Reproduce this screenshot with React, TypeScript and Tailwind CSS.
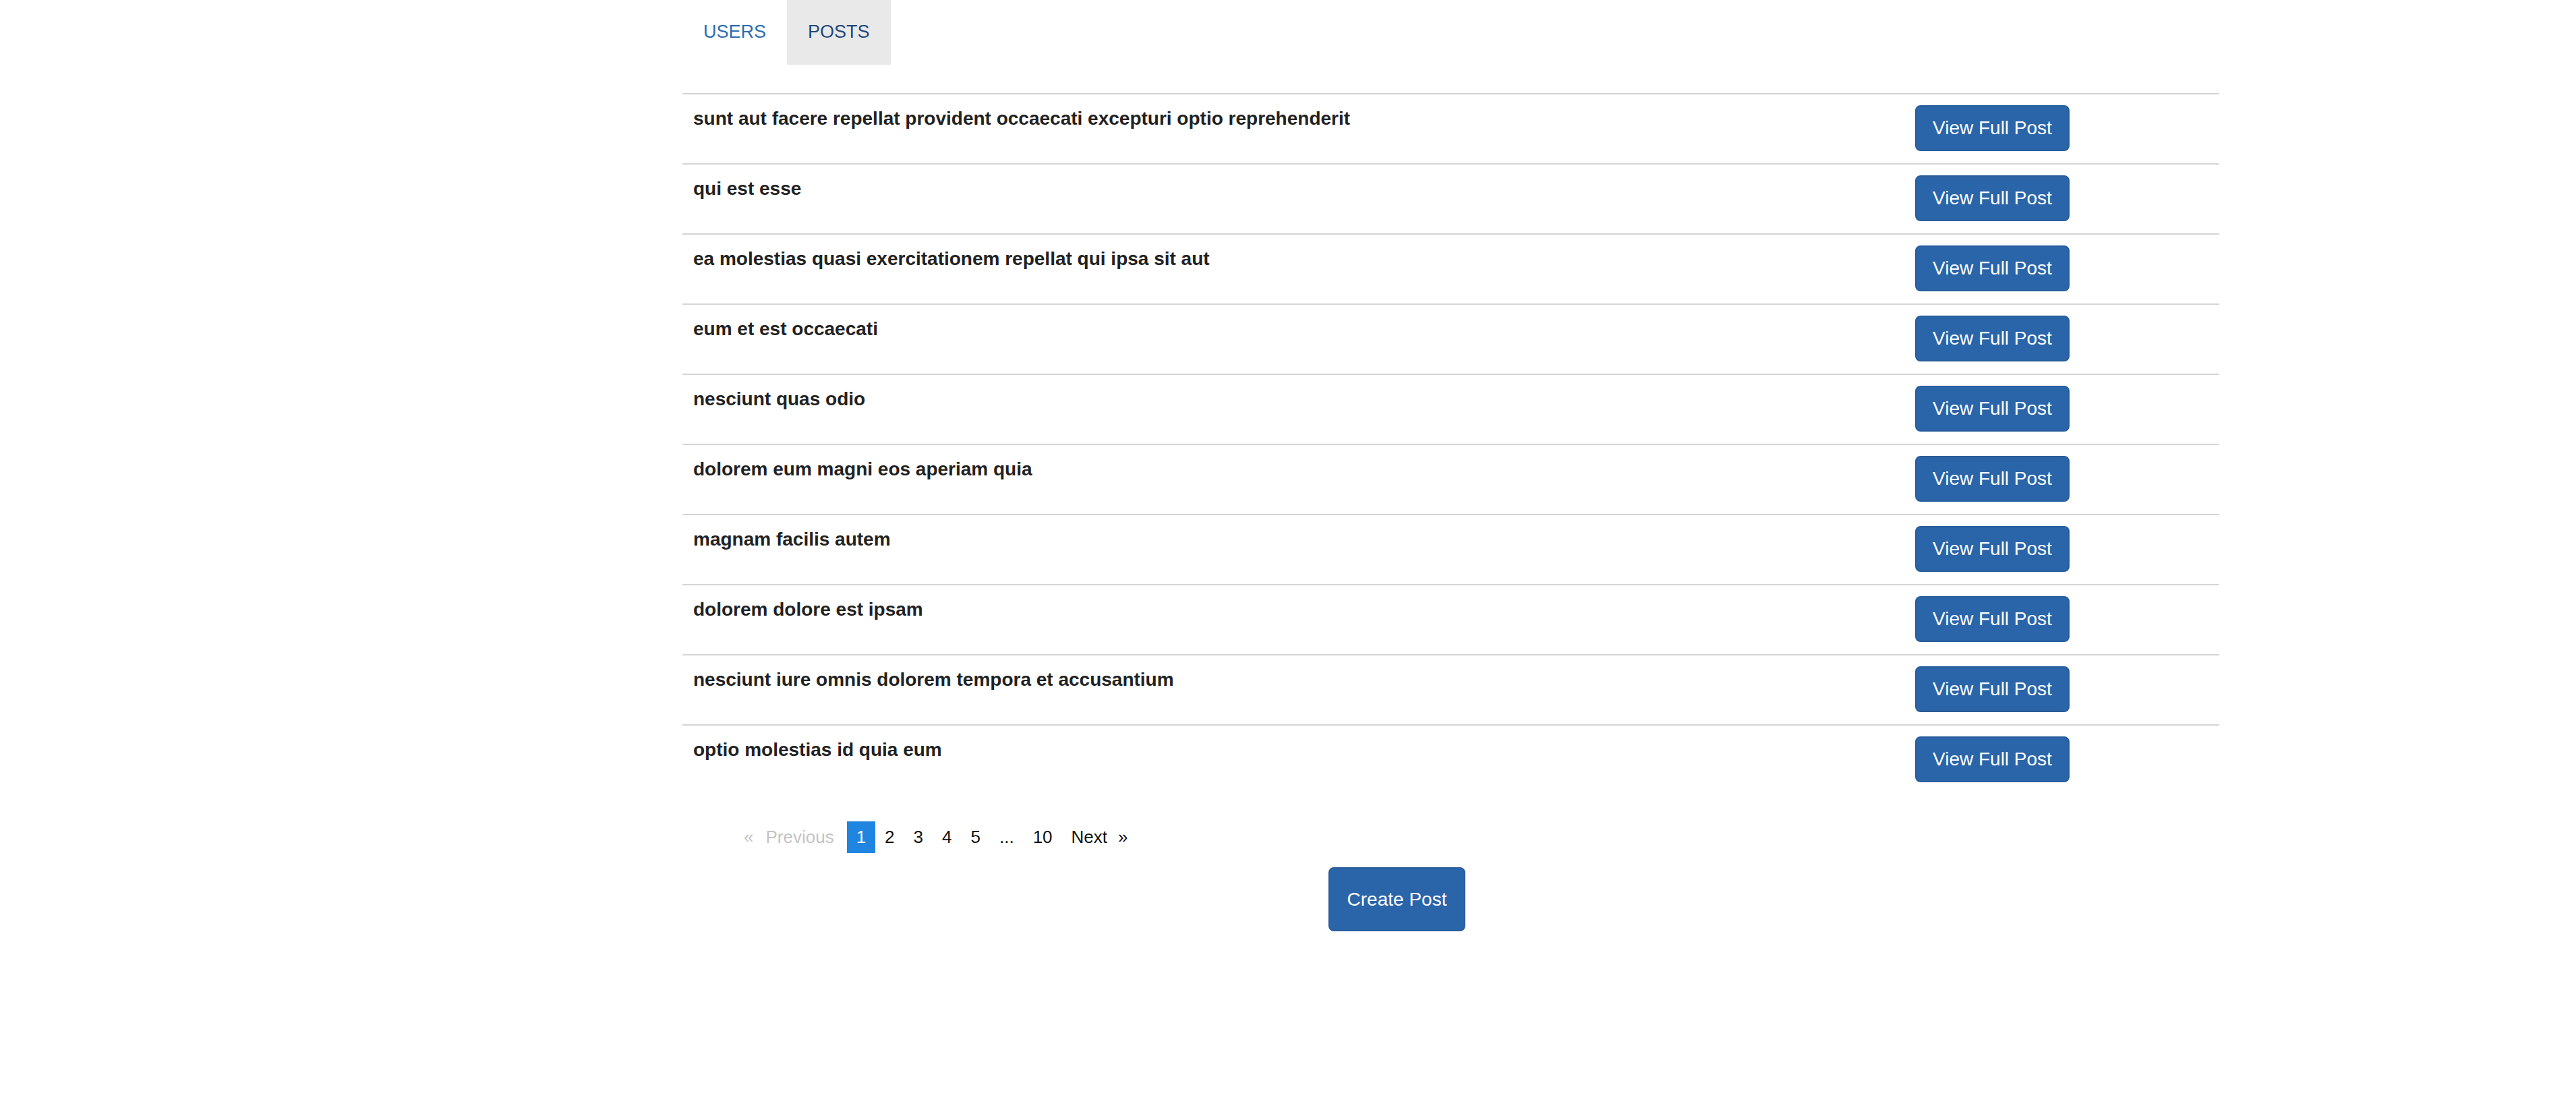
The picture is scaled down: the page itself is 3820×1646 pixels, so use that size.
import { useState } from "react";

const posts = [
  "sunt aut facere repellat provident occaecati excepturi optio reprehenderit",
  "qui est esse",
  "ea molestias quasi exercitationem repellat qui ipsa sit aut",
  "eum et est occaecati",
  "nesciunt quas odio",
  "dolorem eum magni eos aperiam quia",
  "magnam facilis autem",
  "dolorem dolore est ipsam",
  "nesciunt iure omnis dolorem tempora et accusantium",
  "optio molestias id quia eum",
];

const pages = ["1", "2", "3", "4", "5", "...", "10"];

export default function App() {
  const [tab, setTab] = useState("posts");
  const [page, setPage] = useState("1");

  return (
    <div className="min-h-screen bg-white font-['Liberation_Sans',Arial,sans-serif]">
      <div className="ml-[1012px] w-[2279px]">
        {/* Tabs */}
        <ul className="flex h-[96px]">
          <li
            onClick={() => setTab("users")}
            className={`flex items-center px-[31px] pb-[2px] text-[27px] cursor-pointer ${
              tab === "users" ? "bg-[#e9e9e9] text-[#1f477a]" : "text-[#2c6cb2]"
            }`}
          >
            USERS
          </li>
          <li
            onClick={() => setTab("posts")}
            className={`flex items-center px-[31px] pb-[2px] text-[27px] cursor-pointer ${
              tab === "posts" ? "bg-[#e9e9e9] text-[#1f477a]" : "text-[#2c6cb2]"
            }`}
          >
            POSTS
          </li>
        </ul>

        {/* Posts table */}
        <div className="mt-[42px]">
          {posts.map((title) => (
            <div
              key={title}
              className="grid grid-cols-[1812px_1fr] border-t-2 border-[#d5d5d5]"
            >
              <div className="px-[16px] pt-[16px] text-[28px] leading-[40px] font-bold text-[#222]">
                {title}
              </div>
              <div className="pl-[16px] pt-[16px] pb-[18px]">
                <button className="h-[68px] px-[24px] rounded-[8px] border-2 border-[#285d9b] bg-[#2b65a9] text-[28px] text-white">
                  View Full Post
                </button>
              </div>
            </div>
          ))}
        </div>

        {/* Pagination */}
        <div className="mt-[40px] ml-[91px] flex items-center h-[47px] text-[26px] text-[#111]">
          <span className="text-[#c4c4c4] mr-[4px]">«</span>
          <span className="pl-[14px] pr-[19px] text-[#c4c4c4]">Previous</span>
          {pages.map((p) => (
            <span
              key={p}
              onClick={() => p !== "..." && setPage(p)}
              className={`flex items-center h-[47px] px-[14px] cursor-pointer ${
                page === p ? "bg-[#2085e0] text-white" : ""
              }`}
            >
              {p}
            </span>
          ))}
          <span className="pl-[14px] pr-[16px]">Next</span>
          <span>»</span>
        </div>

        {/* Create */}
        <div className="mt-[21px] ml-[958px]">
          <button className="w-[203px] h-[95px] rounded-[8px] border-2 border-[#285d9b] bg-[#2b65a9] text-[28px] text-white">
            Create Post
          </button>
        </div>
      </div>
    </div>
  );
}
